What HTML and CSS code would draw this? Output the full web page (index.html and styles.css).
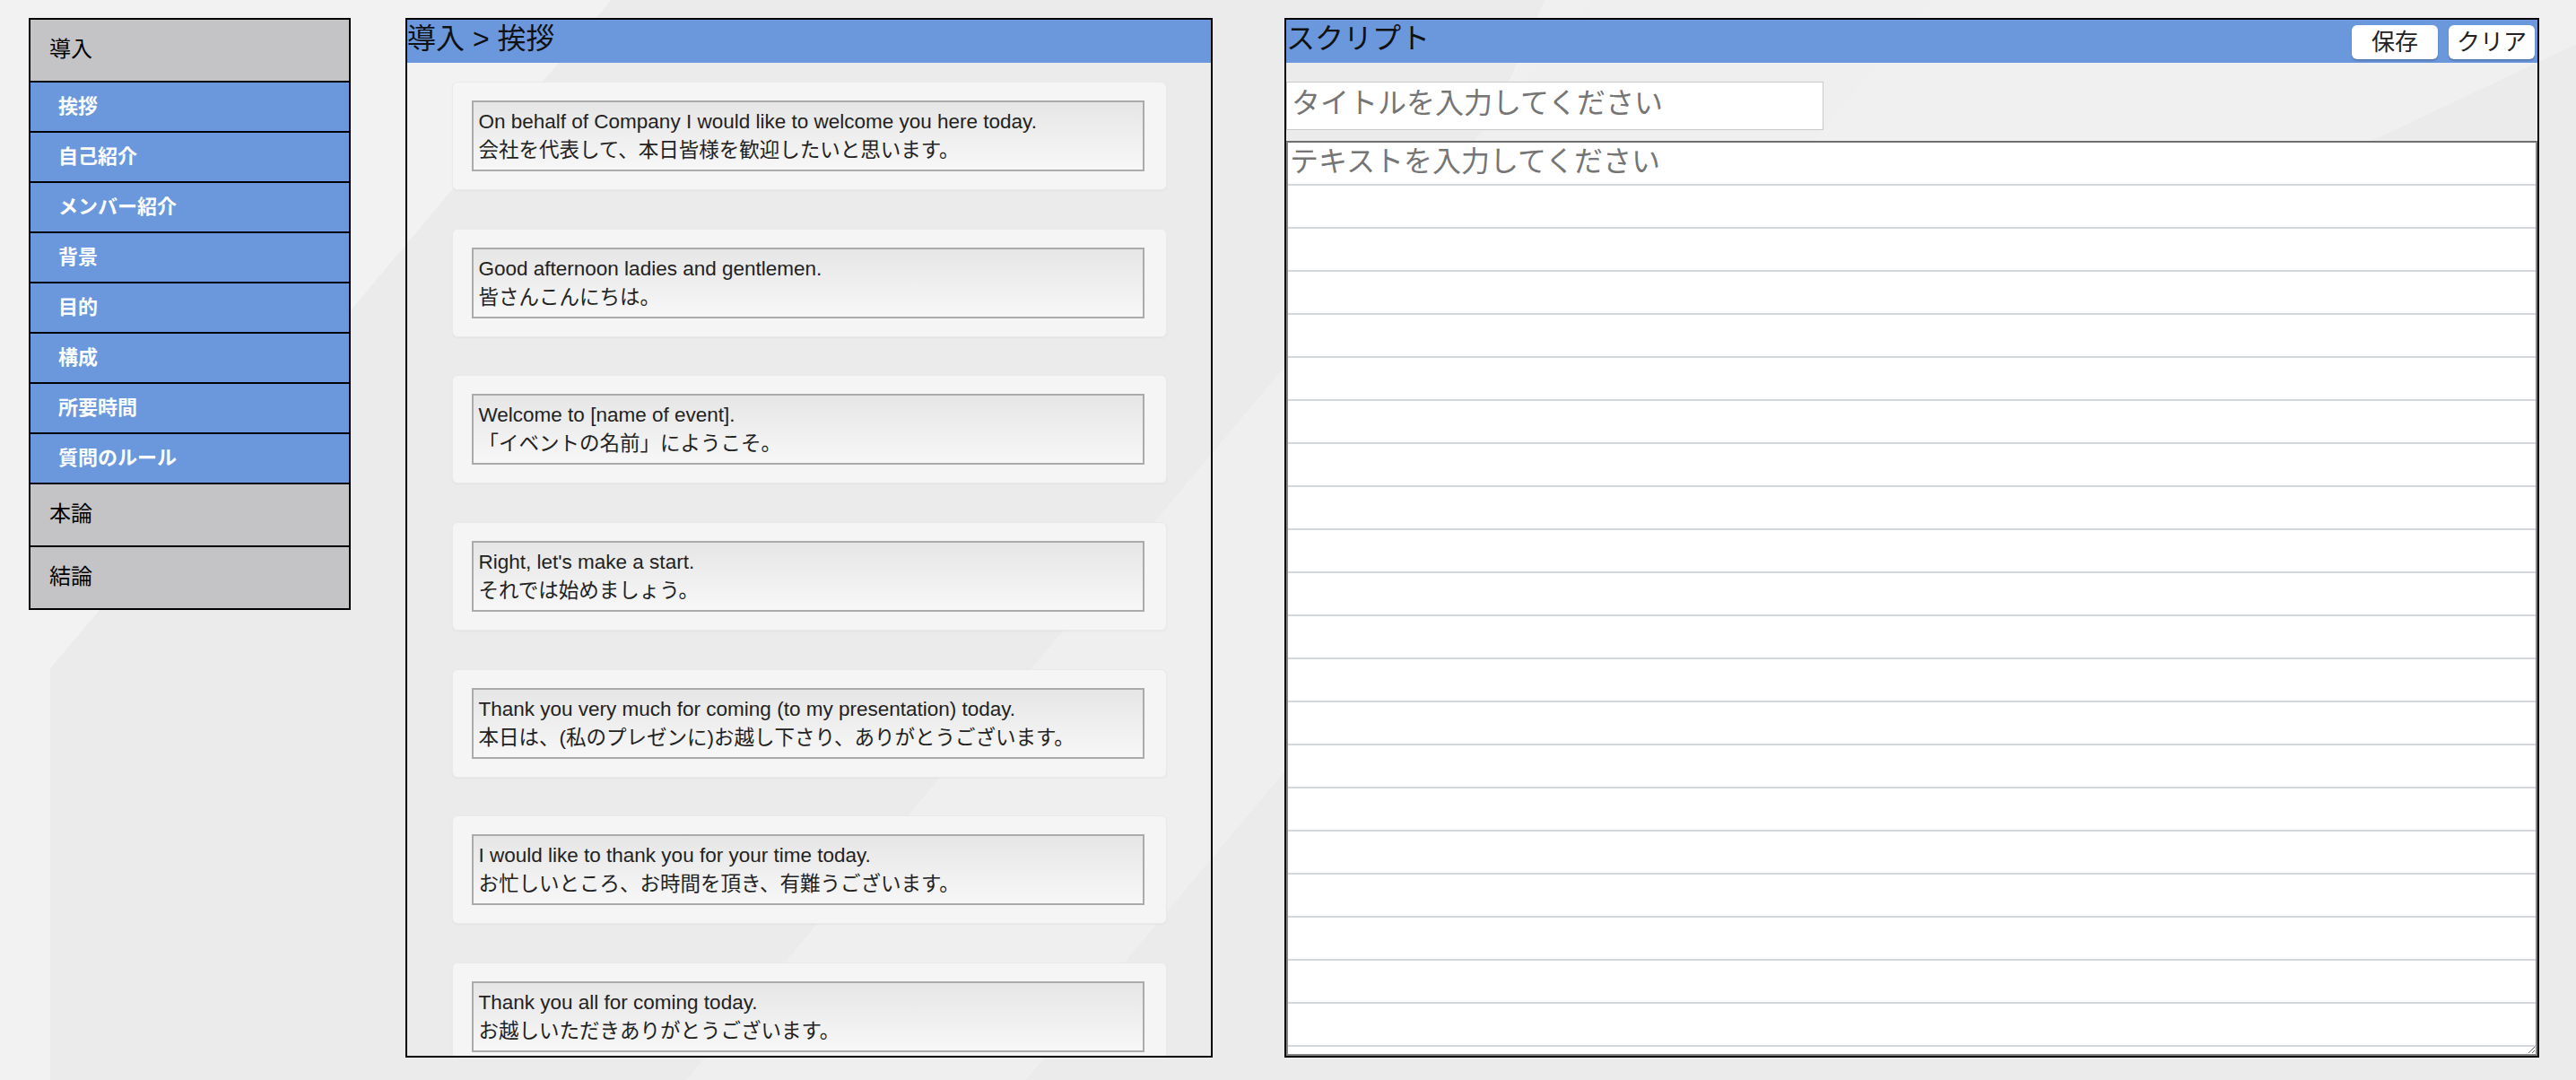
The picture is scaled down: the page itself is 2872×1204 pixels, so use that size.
FILE: index.html
```html
<!DOCTYPE html>
<html lang="ja">
<head>
<meta charset="utf-8">
<title>スクリプト</title>
<link rel="stylesheet" href="styles.css">
</head>
<body>
<div class="app">
  <nav class="sidebar">
    <div class="cat">導入</div>
    <ul class="subs">
      <li class="sub">挨拶</li>
      <li class="sub">自己紹介</li>
      <li class="sub">メンバー紹介</li>
      <li class="sub">背景</li>
      <li class="sub">目的</li>
      <li class="sub">構成</li>
      <li class="sub">所要時間</li>
      <li class="sub">質問のルール</li>
    </ul>
    <div class="cat">本論</div>
    <div class="cat last">結論</div>
  </nav>

  <section class="phrases">
    <h2 class="panel-title">導入 &gt; 挨拶</h2>
    <div class="phrase-list">
      <div class="card"><div class="phrase">On behalf of Company I would like to welcome you here today.<br>会社を代表して、本日皆様を歓迎したいと思います。</div></div>
      <div class="card"><div class="phrase">Good afternoon ladies and gentlemen.<br>皆さんこんにちは。</div></div>
      <div class="card"><div class="phrase">Welcome to [name of event].<br>「イベントの名前」にようこそ。</div></div>
      <div class="card"><div class="phrase">Right, let's make a start.<br>それでは始めましょう。</div></div>
      <div class="card"><div class="phrase">Thank you very much for coming (to my presentation) today.<br>本日は、(私のプレゼンに)お越し下さり、ありがとうございます。</div></div>
      <div class="card"><div class="phrase">I would like to thank you for your time today.<br>お忙しいところ、お時間を頂き、有難うございます。</div></div>
      <div class="card"><div class="phrase">Thank you all for coming today.<br>お越しいただきありがとうございます。</div></div>
    </div>
  </section>

  <section class="script">
    <div class="script-head">
      <h2 class="panel-title">スクリプト</h2>
      <div class="btns">
        <button class="btn" type="button">保存</button>
        <button class="btn" type="button">クリア</button>
      </div>
    </div>
    <input class="title-input" type="text" placeholder="タイトルを入力してください">
    <textarea class="script-text" placeholder="テキストを入力してください"></textarea>
  </section>
</div>
</body>
</html>
```

FILE: styles.css
```css
html {
  height: 100%;
  overflow: hidden;
  background-color: #ebebeb;
  background-image:
    linear-gradient(#f2f2f2, #f2f2f2),
    linear-gradient(130deg, #f2f2f2 0 522px, transparent 522px),
    linear-gradient(130deg, transparent 0 1360px, #efefef 1360px 1650px, transparent 1650px),
    linear-gradient(113.6deg, #ebebeb 0 1578px, transparent 1578px),
    linear-gradient(154.7deg, #f0f0f0 0 1272px, transparent 1272px);
  background-size: 56px 460px, 100% 100%, 100% 100%, 100% 100%, 100% 100%;
  background-position: 0 744px, 0 0, 0 0, 0 0, 0 0;
  background-repeat: no-repeat;
}

body {
  margin: 0;
  height: 100%;
  overflow: hidden;
  font-family: "Liberation Sans", "Noto Sans CJK JP", sans-serif;
  color: #111;
}

.app {
  display: flex;
  align-items: flex-start;
  padding: 20px 0 0 32px;
}

/* ---------- sidebar ---------- */
.sidebar {
  width: 359px;
  box-sizing: border-box;
  border: 2px solid #000;
  flex: none;
}

.cat {
  height: 70px;
  box-sizing: border-box;
  display: flex;
  align-items: center;
  padding: 0 0 8px 21px;
  background: #c4c4c6;
  font-size: 24px;
  color: #000;
  border-bottom: 2px solid #000;
}

.cat.last {
  height: 68px;
  border-bottom: none;
}

.subs {
  list-style: none;
  margin: 0;
  padding: 0;
}

.sub {
  height: 56px;
  box-sizing: border-box;
  display: flex;
  align-items: center;
  padding: 0 0 6px 31px;
  background: #6b98dc;
  color: #fff;
  font-size: 22px;
  font-weight: bold;
  border-bottom: 2px solid #000;
}

/* ---------- panels ---------- */
.panel-title {
  margin: 0;
  height: 48px;
  line-height: 42px;
  font-size: 32px;
  font-weight: normal;
  color: #111;
  background: #6b98dc;
}

.phrases {
  width: 900px;
  height: 1159px;
  box-sizing: border-box;
  margin-left: 61px;
  border: 2px solid #000;
  display: flex;
  flex-direction: column;
  flex: none;
}

.phrase-list {
  flex: 1;
  overflow: hidden;
  padding-top: 21px;
}

.card {
  width: 797px;
  box-sizing: border-box;
  margin: 0 auto 42.7px;
  padding: 20px 24px 20px 21px;
  background: #f5f5f5;
  border: 1px solid #e9e9e9;
  border-radius: 6px;
  box-shadow: 0 1px 2px rgba(0, 0, 0, 0.04);
}

.phrase {
  border: 2px solid #ababab;
  padding: 6px 6px 5px;
  background: linear-gradient(#e6e6e6, #f7f7f7);
  font-size: 22.5px;
  line-height: 32px;
  color: #222;
  white-space: nowrap;
}

/* ---------- script ---------- */
.script {
  width: 1399px;
  height: 1159px;
  box-sizing: border-box;
  margin-left: 80px;
  border: 2px solid #000;
  display: flex;
  flex-direction: column;
  flex: none;
}

.script-head {
  display: flex;
  align-items: center;
  justify-content: space-between;
  background: #6b98dc;
  height: 48px;
}

.script-head .panel-title {
  background: none;
}

.btns {
  display: flex;
  gap: 12px;
  margin-right: 3px;
  padding-top: 2px;
}

.btn {
  width: 96px;
  height: 38px;
  padding: 0;
  border: none;
  border-radius: 6px;
  background: #fff;
  box-shadow: 0 2px 2px rgba(0, 0, 0, 0.18);
  font-family: "Liberation Sans", "Noto Sans CJK JP", sans-serif;
  font-size: 26px;
  line-height: 36px;
  color: #222;
}

.title-input {
  display: block;
  width: 599px;
  height: 54px;
  box-sizing: border-box;
  margin: 21px 0 12px 0;
  padding: 0 5px 6px;
  border: 1px solid #c9c9c9;
  background: #fff;
  font-family: "Liberation Sans", "Noto Sans CJK JP", sans-serif;
  font-size: 32px;
  color: #222;
  outline: none;
}

.title-input::placeholder,
.script-text::placeholder {
  color: #757575;
}

.script-text::placeholder {
  line-height: 42px;
}

.script-text {
  display: block;
  flex: none;
  height: 1020px;
  box-sizing: border-box;
  margin: 0;
  padding: 0 2px;
  border: 2px solid #858585;
  border-top-color: #6f6f6f;
  background-color: #fff;
  background-image: repeating-linear-gradient(to bottom, transparent 0 46px, #d3d6da 46px 48px);
  background-attachment: local;
  font-family: "Liberation Sans", "Noto Sans CJK JP", sans-serif;
  font-size: 32px;
  line-height: 48px;
  color: #222;
  outline: none;
  resize: both;
}
```
